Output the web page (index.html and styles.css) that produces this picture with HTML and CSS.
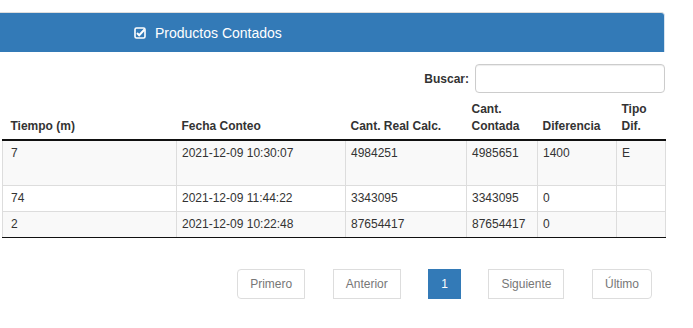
FILE: index.html
```html
<!DOCTYPE html>
<html>
<head>
    <title>Productos Contados</title>
    <link rel="stylesheet" href="styles.css">
</head>
<body>
    <div class="panel">
        <div class="panel-heading">
            <svg class="check-icon" width="12" height="12" viewBox="0 0 12 12">
                <rect x="1" y="1" width="10" height="10" rx="1.5" fill="none" stroke="#fff" stroke-width="1.6"/>
                <path d="M3 6 L5.2 8.2 L10.5 2.5" fill="none" stroke="#fff" stroke-width="2"/>
            </svg>
            <span>Productos Contados</span>
        </div>

        <div class="table-filter">
            <label for="buscar">Buscar:</label>
            <input type="text" id="buscar" class="filter-input">
        </div>

        <table class="data-table">
            <colgroup>
                <col class="col-tiempo">
                <col class="col-fecha">
                <col class="col-real">
                <col class="col-contada">
                <col class="col-dif">
                <col class="col-tipo">
            </colgroup>
            <thead>
                <tr>
                    <th>Tiempo (m)</th>
                    <th>Fecha Conteo</th>
                    <th>Cant. Real Calc.</th>
                    <th>Cant.<br>Contada</th>
                    <th>Diferencia</th>
                    <th>Tipo<br>Dif.</th>
                </tr>
            </thead>
            <tbody>
                <tr class="odd tall">
                    <td>7</td>
                    <td>2021-12-09 10:30:07</td>
                    <td>4984251</td>
                    <td>4985651</td>
                    <td>1400</td>
                    <td>E</td>
                </tr>
                <tr>
                    <td>74</td>
                    <td>2021-12-09 11:44:22</td>
                    <td>3343095</td>
                    <td>3343095</td>
                    <td>0</td>
                    <td></td>
                </tr>
                <tr class="odd">
                    <td>2</td>
                    <td>2021-12-09 10:22:48</td>
                    <td>87654417</td>
                    <td>87654417</td>
                    <td>0</td>
                    <td></td>
                </tr>
            </tbody>
        </table>

        <div class="pagination">
            <a class="page-button first">Primero</a>
            <a class="page-button">Anterior</a>
            <a class="page-button current">1</a>
            <a class="page-button">Siguiente</a>
            <a class="page-button last">Último</a>
        </div>
    </div>
</body>
</html>
```

FILE: styles.css
```css
body {
    font-family: "Liberation Sans", Arial, sans-serif;
    font-size: 12px;
    color: #333;
    background-color: #fff;
    margin: 0;
    padding: 0;
}

.panel {
    width: 665px;
    margin-top: 12px;
}

.panel-heading {
    height: 39px;
    background-color: #337ab7;
    border-top: 1px solid #ddd;
    border-right: 1px solid #d6e3ef;
    border-top-right-radius: 4px;
    color: #fff;
    font-size: 14px;
    display: flex;
    align-items: center;
    padding-left: 134px;
}

.check-icon {
    margin-right: 9px;
}

.table-filter {
    display: flex;
    justify-content: flex-end;
    align-items: center;
    margin-top: 12px;
}

.table-filter label {
    font-weight: bold;
    margin-right: 6px;
}

.filter-input {
    width: 190px;
    height: 29px;
    box-sizing: border-box;
    border: 1px solid #ccc;
    border-radius: 4px;
    box-shadow: inset 0 1px 1px rgba(0, 0, 0, 0.075);
    margin: 0;
    padding: 4px 8px;
}

.data-table {
    width: 663px;
    margin-left: 2px;
    table-layout: fixed;
    border-collapse: collapse;
    border-bottom: 1px solid #111;
}

.col-tiempo { width: 174px; }
.col-fecha { width: 169px; }
.col-real { width: 121px; }
.col-contada { width: 71px; }
.col-dif { width: 79px; }
.col-tipo { width: 49px; }

.data-table th {
    text-align: left;
    vertical-align: bottom;
    font-weight: bold;
    line-height: 17px;
    padding: 8px 5px 4px 5px;
    border-bottom: 2px solid #111;
}

.data-table td {
    line-height: 17px;
    padding: 4px 5px;
    vertical-align: top;
    border: 1px solid #ddd;
}

.data-table th:first-child,
.data-table td:first-child {
    padding-left: 8px;
}

.data-table tr.odd td {
    background-color: #f9f9f9;
}

.data-table tr.tall td {
    height: 36px;
}

.data-table tr:last-child td {
    border-bottom: 1px solid #111;
}

.pagination {
    display: flex;
    justify-content: flex-end;
    gap: 27.5px;
    margin-top: 31px;
    padding-right: 13px;
}

.page-button {
    display: block;
    height: 30px;
    box-sizing: border-box;
    padding: 6px 12px;
    line-height: 16px;
    border: 1px solid #ddd;
    color: #777;
    background-color: #fff;
    text-decoration: none;
}

.page-button.first {
    border-top-left-radius: 4px;
    border-bottom-left-radius: 4px;
}

.page-button.last {
    border-top-right-radius: 4px;
    border-bottom-right-radius: 4px;
}

.page-button.current {
    background-color: #337ab7;
    border-color: #337ab7;
    color: #fff;
}
```
